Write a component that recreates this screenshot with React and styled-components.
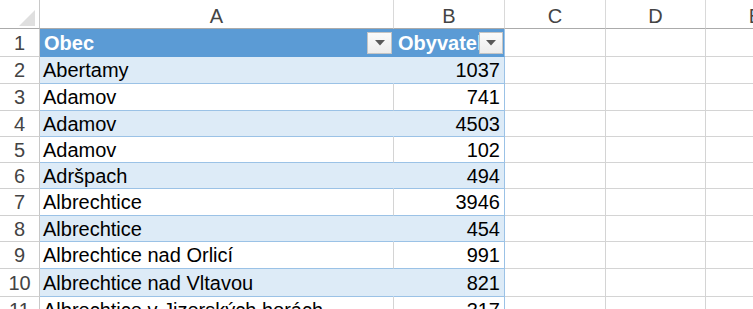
import React from "react";
import styled, { createGlobalStyle } from "styled-components";

const Global = createGlobalStyle`
  html, body { margin: 0; padding: 0; background: #ffffff; overflow: hidden; }
  body { font-family: "Liberation Sans", Arial, sans-serif; }
`;

const COLS = "40px 354px 111px 101px 100px 100px";

const Sheet = styled.div`
  display: flex;
  flex-direction: column;
  width: 753px;
  height: 309px;
  overflow: hidden;
  font-family: "Liberation Sans", Arial, sans-serif;
  font-size: 20px;
  color: #000;
`;

const Row = styled.div`
  display: grid;
  grid-template-columns: ${COLS};
  height: ${(p) => p.$h}px;
  flex: none;
`;

const Corner = styled.div`
  box-sizing: border-box;
  border-right: 1px solid #c8c8c8;
  border-bottom: 1px solid #ababab;
  display: flex;
  align-items: flex-end;
  justify-content: flex-end;
  padding: 0 4px 2px 0;
`;

const ColHead = styled.div`
  box-sizing: border-box;
  border-right: 1px solid #d9d9d9;
  border-bottom: 1px solid #ababab;
  color: #444;
  text-align: center;
  line-height: 20px;
  padding-top: 6px;
`;

const RowHead = styled.div`
  box-sizing: border-box;
  border-right: 1px solid #c8c8c8;
  border-bottom: 1px solid #d0d0d0;
  color: #444;
  display: flex;
  align-items: center;
  justify-content: center;
  padding-top: 1px;
`;

const Cell = styled.div`
  box-sizing: border-box;
  border-right: 1px solid ${(p) => (p.$edge ? "#9bc2e6" : p.$fill ? "transparent" : "#d4d4d4")};
  border-bottom: 1px solid ${(p) => (p.$table ? "#9bc2e6" : "#d4d4d4")};
  background: ${(p) => p.$fill || "transparent"};
  display: flex;
  align-items: center;
  justify-content: ${(p) => (p.$num ? "flex-end" : "flex-start")};
  padding: 1px ${(p) => (p.$num ? "4px" : "2px")} 0 3px;
  white-space: nowrap;
  overflow: hidden;
`;

const HeadCell = styled.div`
  box-sizing: border-box;
  background: #5b9bd5;
  border-bottom: 1px solid #5b9bd5;
  border-right: 1px solid ${(p) => (p.$edge ? "#9bc2e6" : "#5b9bd5")};
  display: flex;
  align-items: center;
  padding: 0 1px 0 4px;
`;

const HeadText = styled.span`
  flex: 1;
  min-width: 0;
  overflow: hidden;
  white-space: nowrap;
  color: #ffffff;
  font-weight: bold;
  padding-top: 1px;
`;

const FilterButton = styled.div`
  flex: none;
  box-sizing: border-box;
  width: ${(p) => p.$w}px;
  height: 22px;
  background: linear-gradient(#fbfbfb, #ececec);
  border: 1px solid #c4c4c4;
  display: flex;
  align-items: center;
  justify-content: center;
`;

const Filter = ({ w }) => (
  <FilterButton $w={w}>
    <svg width="10" height="6" viewBox="0 0 10 6">
      <polygon points="0,0 10,0 5,5.5" fill="#595959" />
    </svg>
  </FilterButton>
);

const data = [
  ["Abertamy", 1037],
  ["Adamov", 741],
  ["Adamov", 4503],
  ["Adamov", 102],
  ["Adršpach", 494],
  ["Albrechtice", 3946],
  ["Albrechtice", 454],
  ["Albrechtice nad Orlicí", 991],
  ["Albrechtice nad Vltavou", 821],
  ["Albrechtice v Jizerských horách", 317],
];

const heights = [27, 27, 26, 26, 26, 27, 26, 27, 28, 27];

export default function App() {
  return (
    <>
      <Global />
      <Sheet>
        <Row $h={29}>
          <Corner>
            <svg width="16" height="16" viewBox="0 0 16 16">
              <polygon points="16,0 16,16 0,16" fill="#dfdfdf" />
            </svg>
          </Corner>
          {["A", "B", "C", "D", "E"].map((c) => (
            <ColHead key={c}>{c}</ColHead>
          ))}
        </Row>
        <Row $h={28}>
          <RowHead>1</RowHead>
          <HeadCell>
            <HeadText>Obec</HeadText>
            <Filter w={25} />
          </HeadCell>
          <HeadCell $edge>
            <HeadText>Obyvatelé</HeadText>
            <Filter w={24} />
          </HeadCell>
          <Cell />
          <Cell />
          <Cell />
        </Row>
        {data.map(([name, n], i) => {
          const fill = i % 2 === 0 ? "#ddebf7" : null;
          return (
            <Row key={i} $h={heights[i]}>
              <RowHead>{i + 2}</RowHead>
              <Cell $table $fill={fill}>{name}</Cell>
              <Cell $table $fill={fill} $num $edge>{n}</Cell>
              <Cell />
              <Cell />
              <Cell />
            </Row>
          );
        })}
      </Sheet>
    </>
  );
}
